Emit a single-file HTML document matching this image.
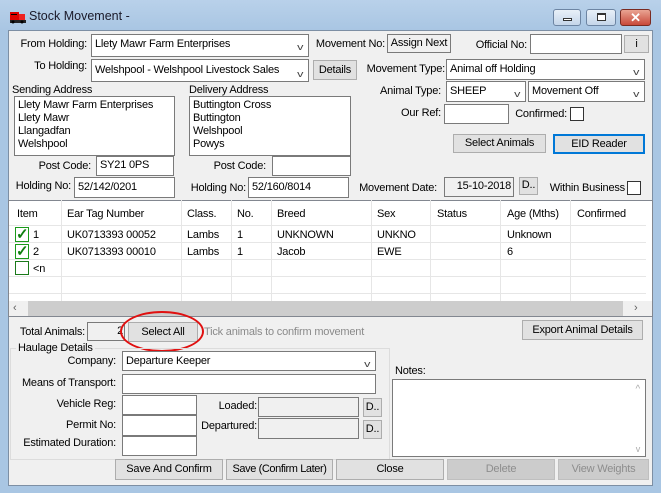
<!DOCTYPE html>
<html><head><style>
*{box-sizing:border-box;margin:0;padding:0}
body{width:661px;height:493px;overflow:hidden;background:#a9c6e3;font-family:"Liberation Sans",sans-serif;font-size:11px;letter-spacing:-0.2px;color:#000;position:relative}
.a{position:absolute;white-space:nowrap}
.t{position:absolute;white-space:nowrap;line-height:13px}
.r{position:absolute;white-space:nowrap;line-height:13px;text-align:right}
.in{position:absolute;background:#fff;border:1px solid #7a7a7a;padding:0 3px;white-space:nowrap;overflow:hidden}
.ro{position:absolute;background:#f0f0f0;border:1px solid #7a7a7a}
.btn{position:absolute;background:#e1e1e1;border:1px solid #adadad;text-align:center;white-space:nowrap;overflow:hidden}
.dis{background:#cccccc;color:#8d8d8d;border-color:#bfbfbf}
.cb{position:absolute;background:#fff;border:1px solid #333;width:14px;height:14px}
.dd{position:absolute;right:6px;top:0;font-size:9px;color:#444;transform:scaleX(1.4)}
.col{position:absolute;top:200px;width:1px;height:101px;background:#e6e6e6}
.row{position:absolute;left:9px;width:637px;height:1px;background:#e6e6e6}
</style></head><body>
<div class="a" style="left:0;top:0;width:661px;height:30px;background:linear-gradient(#b9d1ea,#a9c6e3)"></div>
<svg class="a" style="left:10px;top:11px" width="16" height="14"><rect x="0" y="1" width="9" height="8" fill="#d00"/><rect x="9" y="3" width="6" height="6" fill="#e22"/><rect x="1" y="3" width="6" height="1" fill="#000"/><rect x="0" y="9" width="16" height="3" fill="#222"/><circle cx="3" cy="11" r="1.5" fill="#000"/><circle cx="12" cy="11" r="1.5" fill="#000"/></svg>
<div class="a" style="left:29px;top:9px;font-size:12.5px;letter-spacing:0;color:#1a1a2a">Stock Movement -</div>
<div class="a" style="left:553px;top:9px;width:28px;height:17px;border:1px solid #6d85a3;border-radius:3px;background:linear-gradient(#e8f0f8,#c5d6ea)"><div style="position:absolute;left:9px;top:8px;width:9px;height:3px;border:1px solid #333;background:#fff"></div></div>
<div class="a" style="left:586px;top:9px;width:30px;height:17px;border:1px solid #6d85a3;border-radius:3px;background:linear-gradient(#e8f0f8,#c5d6ea)"><div style="position:absolute;left:10px;top:3px;width:9px;height:8px;border:1px solid #333;border-top-width:2px;background:#fff"></div></div>
<div class="a" style="left:620px;top:9px;width:31px;height:17px;border:1px solid #7a2a20;border-radius:3px;background:linear-gradient(#e9a493,#c8493a);color:#fff;font-weight:bold;text-align:center;line-height:15px;font-size:13px">✕</div>
<div class="a" style="left:8px;top:30px;width:645px;height:456px;background:#f0f0f0;border:1px solid #7d8fa4"></div>

<div class="r" style="right:574px;top:38px">From Holding:</div>
<div class="in" style="left:91px;top:34px;width:218px;height:23px;line-height:19px">Llety Mawr Farm Enterprises<span class="dd" style="top:3px">v</span></div>
<div class="r" style="right:574px;top:60px">To Holding:</div>
<div class="in" style="left:91px;top:59px;width:218px;height:23px;line-height:21px">Welshpool - Welshpool Livestock Sales<span class="dd" style="top:4px">v</span></div>
<div class="btn" style="left:313px;top:60px;width:44px;height:20px;line-height:18px">Details</div>
<div class="r" style="right:276px;top:38px">Movement No:</div>
<div class="a" style="left:387px;top:34px;width:64px;height:19px;border:1px solid #7a7a7a;background:#f0f0f0;text-align:center;line-height:17px">Assign Next</div>
<div class="r" style="right:134px;top:39px">Official No:</div>
<div class="in" style="left:530px;top:34px;width:92px;height:20px"></div>
<div class="btn" style="left:624px;top:35px;width:25px;height:18px;line-height:16px">i</div>
<div class="r" style="right:216px;top:63px">Movement Type:</div>
<div class="in" style="left:446px;top:59px;width:199px;height:21px;line-height:19px">Animal off Holding<span class="dd" style="top:3px">v</span></div>
<div class="r" style="right:220px;top:85px">Animal Type:</div>
<div class="in" style="left:446px;top:81px;width:80px;height:21px;line-height:18px">SHEEP<span class="dd" style="top:3px">v</span></div>
<div class="in" style="left:528px;top:81px;width:117px;height:21px;line-height:18px">Movement Off<span class="dd" style="top:3px">v</span></div>
<div class="r" style="right:220px;top:107px">Our Ref:</div>
<div class="in" style="left:444px;top:104px;width:65px;height:20px"></div>
<div class="r" style="right:94px;top:108px">Confirmed:</div>
<div class="cb" style="left:570px;top:107px"></div>
<div class="btn" style="left:453px;top:134px;width:93px;height:19px;line-height:17px">Select Animals</div>
<div class="btn" style="left:553px;top:134px;width:92px;height:20px;border:2px solid #0078d7;line-height:16px">EID Reader</div>

<div class="t" style="left:12px;top:84px">Sending Address</div>
<div class="a" style="left:14px;top:96px;width:161px;height:60px;background:#fff;border:1px solid #7a7a7a;padding:2px 3px;line-height:13px">Llety Mawr Farm Enterprises<br>Llety Mawr<br>Llangadfan<br>Welshpool</div>
<div class="t" style="left:189px;top:84px">Delivery Address</div>
<div class="a" style="left:189px;top:96px;width:162px;height:60px;background:#fff;border:1px solid #7a7a7a;padding:2px 3px;line-height:13px">Buttington Cross<br>Buttington<br>Welshpool<br>Powys</div>
<div class="r" style="right:570px;top:160px">Post Code:</div>
<div class="in" style="left:96px;top:156px;width:78px;height:20px;line-height:17px">SY21 0PS</div>
<div class="r" style="right:395px;top:160px">Post Code:</div>
<div class="in" style="left:272px;top:156px;width:79px;height:20px"></div>
<div class="r" style="right:590px;top:180px">Holding No:</div>
<div class="in" style="left:74px;top:177px;width:101px;height:21px;line-height:18px">52/142/0201</div>
<div class="r" style="right:415px;top:182px">Holding No:</div>
<div class="in" style="left:248px;top:177px;width:101px;height:21px;line-height:18px">52/160/8014</div>
<div class="r" style="right:224px;top:182px">Movement Date:</div>
<div class="ro" style="left:444px;top:177px;width:70px;height:20px;text-align:right;padding-right:2px;line-height:17px">15-10-2018</div>
<div class="btn" style="left:519px;top:177px;width:19px;height:18px;line-height:15px">D..</div>
<div class="r" style="right:36px;top:182px">Within Business</div>
<div class="cb" style="left:627px;top:181px"></div>

<div class="a" style="left:8px;top:200px;width:645px;height:117px;background:#fff;border:1px solid #828790"></div>
<div class="col" style="left:61px"></div><div class="col" style="left:181px"></div><div class="col" style="left:231px"></div><div class="col" style="left:271px"></div><div class="col" style="left:371px"></div><div class="col" style="left:430px"></div><div class="col" style="left:500px"></div><div class="col" style="left:570px"></div>
<div class="row" style="top:225px"></div><div class="row" style="top:242px"></div><div class="row" style="top:259px"></div><div class="row" style="top:276px"></div><div class="row" style="top:293px"></div>
<div class="a" style="left:646px;top:201px;width:6px;height:100px;background:#fff"></div>
<div class="t" style="left:17px;top:208px">Item</div><div class="t" style="left:67px;top:208px">Ear Tag Number</div><div class="t" style="left:187px;top:208px">Class.</div><div class="t" style="left:237px;top:208px">No.</div><div class="t" style="left:277px;top:208px">Breed</div><div class="t" style="left:377px;top:208px">Sex</div><div class="t" style="left:437px;top:208px">Status</div><div class="t" style="left:507px;top:208px">Age (Mths)</div><div class="t" style="left:577px;top:208px">Confirmed</div>
<div class="a" style="left:15px;top:227px;width:14px;height:15px;border:1px solid #1a9a1a;background:#fff;color:#108010;font-weight:bold;font-size:15px;line-height:13px">✓</div>
<div class="a" style="left:15px;top:244px;width:14px;height:15px;border:1px solid #1a9a1a;background:#fff;color:#108010;font-weight:bold;font-size:15px;line-height:13px">✓</div>
<div class="a" style="left:15px;top:261px;width:14px;height:14px;border:1px solid #1a7a1a;background:#fff"></div>
<div class="t" style="left:33px;top:229px">1</div><div class="t" style="left:67px;top:229px">UK0713393 00052</div><div class="t" style="left:187px;top:229px">Lambs</div><div class="t" style="left:237px;top:229px">1</div><div class="t" style="left:277px;top:229px">UNKNOWN</div><div class="t" style="left:377px;top:229px">UNKNO</div><div class="t" style="left:507px;top:229px">Unknown</div>
<div class="t" style="left:33px;top:246px">2</div><div class="t" style="left:67px;top:246px">UK0713393 00010</div><div class="t" style="left:187px;top:246px">Lambs</div><div class="t" style="left:237px;top:246px">1</div><div class="t" style="left:277px;top:246px">Jacob</div><div class="t" style="left:377px;top:246px">EWE</div><div class="t" style="left:507px;top:246px">6</div>
<div class="t" style="left:33px;top:263px">&lt;n</div>
<div class="a" style="left:9px;top:301px;width:643px;height:15px;background:#f0f0f0"></div>
<div class="a" style="left:28px;top:301px;width:595px;height:15px;background:#cdcdcd"></div>
<div class="t" style="left:13px;top:302px;color:#606060">‹</div><div class="t" style="left:634px;top:302px;color:#606060">›</div>

<div class="r" style="right:576px;top:326px">Total Animals:</div>
<div class="ro" style="left:87px;top:322px;width:38px;height:19px;text-align:right;line-height:17px;padding-right:1px">2</div>
<div class="btn" style="left:128px;top:322px;width:70px;height:20px;line-height:18px">Select All</div>
<div class="t" style="left:204px;top:326px;color:#8a8a8a">Tick animals to confirm movement</div>
<div class="a" style="left:120px;top:311px;width:84px;height:41px;border:2px solid #e01010;border-radius:50%"></div>
<div class="btn" style="left:522px;top:320px;width:121px;height:20px;line-height:18px">Export Animal Details</div>

<div class="a" style="left:10px;top:348px;width:380px;height:112px;border:1px solid #dcdcdc"></div>
<div class="t" style="left:16px;top:342px;background:#f0f0f0;padding:0 2px">Haulage Details</div>
<div class="r" style="right:545px;top:355px">Company:</div>
<div class="in" style="left:122px;top:351px;width:254px;height:20px;line-height:18px">Departure Keeper<span class="dd" style="top:3px">v</span></div>
<div class="r" style="right:545px;top:377px">Means of Transport:</div>
<div class="in" style="left:122px;top:374px;width:254px;height:20px"></div>
<div class="r" style="right:545px;top:398px">Vehicle Reg:</div>
<div class="in" style="left:122px;top:395px;width:75px;height:20px"></div>
<div class="r" style="right:545px;top:419px">Permit No:</div>
<div class="in" style="left:122px;top:415px;width:75px;height:21px"></div>
<div class="r" style="right:545px;top:437px">Estimated Duration:</div>
<div class="in" style="left:122px;top:436px;width:75px;height:20px"></div>
<div class="r" style="right:404px;top:400px">Loaded:</div>
<div class="ro" style="left:258px;top:397px;width:101px;height:20px"></div>
<div class="btn" style="left:363px;top:398px;width:19px;height:19px;line-height:16px">D..</div>
<div class="r" style="right:404px;top:420px">Departured:</div>
<div class="ro" style="left:258px;top:418px;width:101px;height:21px"></div>
<div class="btn" style="left:363px;top:420px;width:19px;height:19px;line-height:16px">D..</div>
<div class="t" style="left:395px;top:365px">Notes:</div>
<div class="a" style="left:392px;top:379px;width:254px;height:78px;background:#fff;border:1px solid #7a7a7a"><span style="position:absolute;right:5px;top:4px;color:#aaa;font-size:10px">^</span><span style="position:absolute;right:5px;bottom:2px;color:#aaa;font-size:9px">v</span></div>
<div class="btn" style="left:115px;top:459px;width:108px;height:21px;line-height:19px">Save And Confirm</div>
<div class="btn" style="left:226px;top:459px;width:107px;height:21px;line-height:19px;letter-spacing:-0.4px">Save (Confirm Later)</div>
<div class="btn" style="left:336px;top:459px;width:108px;height:21px;line-height:19px">Close</div>
<div class="btn dis" style="left:447px;top:459px;width:108px;height:21px;line-height:19px">Delete</div>
<div class="btn dis" style="left:558px;top:459px;width:91px;height:21px;line-height:19px">View Weights</div>
</body></html>
